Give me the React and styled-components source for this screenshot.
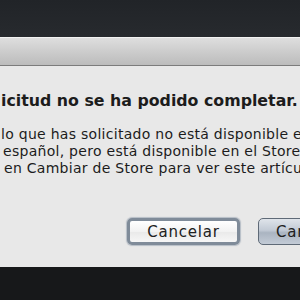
import React from "react";
import styled, { createGlobalStyle } from "styled-components";

const Global = createGlobalStyle`
  html, body { margin: 0; padding: 0; background: #17181a; }
  body { font-family: "DejaVu Sans", "Liberation Sans", sans-serif; }
`;

const Frame = styled.div`
  width: 300px;
  height: 300px;
  overflow: hidden;
  display: flex;
  flex-direction: column;
  background: #17181a;
`;

const Backdrop = styled.div`
  height: 37px;
  flex: none;
  background: linear-gradient(#212428, #272a2e);
`;

const Sheet = styled.div`
  flex: none;
  display: flex;
  flex-direction: column;
`;

const TitleBar = styled.div`
  box-sizing: border-box;
  height: 29px;
  border-top: 1px solid #f2f2f2;
  border-bottom: 1px solid #7c7c7c;
  background: linear-gradient(#dedede, #c9c9c9 60%, #bcbcbc);
`;

const Content = styled.div`
  height: 201px;
  background: #e8e8e8;
  box-sizing: border-box;
  padding-top: 25px;
  display: flex;
  flex-direction: column;
  color: #1c1c1c;
`;

const Line = styled.div`
  display: flex;
  white-space: pre;
  margin-left: ${(p) => p.$x}px;
  font-size: ${(p) => (p.$title ? "15.8px" : "14px")};
  letter-spacing: ${(p) => (p.$title ? "0" : "0.28px")};
  font-weight: ${(p) => (p.$title ? 700 : 400)};
  line-height: ${(p) => (p.$title ? "20px" : "17px")};
  margin-bottom: ${(p) => p.$gap || 0}px;
`;

const Hidden = styled.span`
  display: inline-flex;
  width: 0;
  justify-content: flex-end;
  white-space: pre;
`;

const Shown = styled.span`
  white-space: pre;
`;

const Buttons = styled.div`
  display: flex;
  gap: 18px;
  margin-top: auto;
  margin-bottom: 22px;
  padding-left: 127px;
`;

const Button = styled.div`
  flex: none;
  box-sizing: border-box;
  height: 27px;
  width: ${(p) => p.$w}px;
  border-radius: 5px;
  display: flex;
  align-items: center;
  white-space: nowrap;
  justify-content: ${(p) => (p.$primary ? "flex-start" : "center")};
  padding-left: ${(p) => (p.$primary ? 17 : 0)}px;
  font-size: 15px;
  letter-spacing: 0.8px;
  color: #202020;
  border: ${(p) => (p.$primary ? "1px solid #5f6a77" : "3px solid #7f8b99")};
  background: ${(p) =>
    p.$primary
      ? "linear-gradient(#dfe4ea, #c2cad5 45%, #aab4c1 55%, #c3cbd6)"
      : "linear-gradient(#ffffff, #f2f2f2 50%, #e9e9e9 51%, #f6f6f6)"};
  box-shadow: ${(p) =>
    p.$primary ? "none" : "0 0 1px 1px rgba(120,135,155,0.45)"};
`;

export default function App() {
  return (
    <>
      <Global />
      <Frame>
        <Backdrop />
        <Sheet>
          <TitleBar />
          <Content>
            <Line $title $x={1} $gap={15}>
              <Hidden>La sol </Hidden>
              <Shown>icitud no se ha podido completar.</Shown>
            </Line>
            <Line $x={1}>
              <Hidden>El artícu </Hidden>
              <Shown>lo que has solicitado no está disponible en el Store</Shown>
            </Line>
            <Line $x={3}>
              <Hidden>de España en </Hidden>
              <Shown>español, pero está disponible en el Store de EE. UU.</Shown>
            </Line>
            <Line $x={4}>
              <Hidden>Haz clic </Hidden>
              <Shown>en Cambiar de Store para ver este artículo.</Shown>
            </Line>
            <Buttons>
              <Button $w={113}>Cancelar</Button>
              <Button $primary $w={160}>Cambiar de Store</Button>
            </Buttons>
          </Content>
        </Sheet>
      </Frame>
    </>
  );
}
